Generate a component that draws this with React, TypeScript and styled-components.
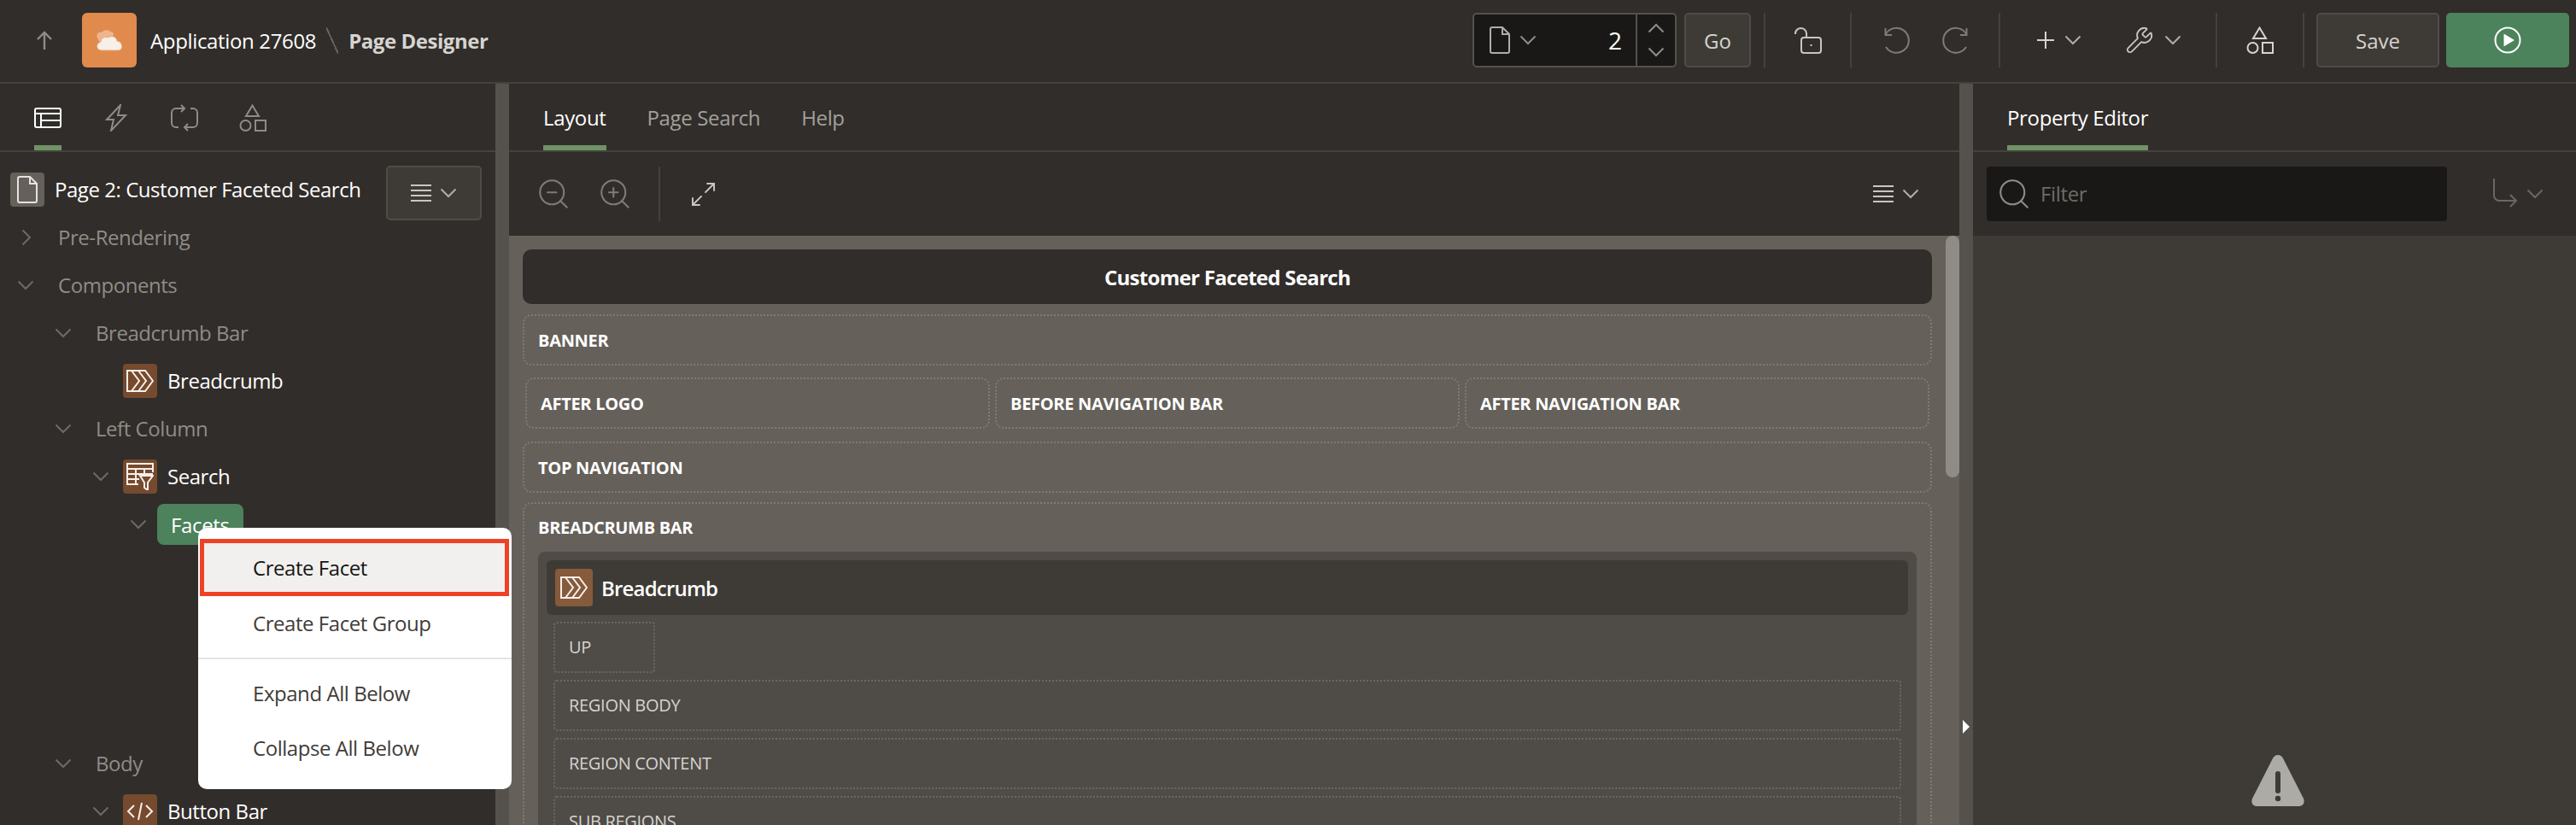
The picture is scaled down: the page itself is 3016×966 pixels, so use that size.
import React from "react";
import styled, { createGlobalStyle } from "styled-components";
import { Search, Wrench, ZoomIn, ZoomOut } from "lucide-react";

const FONT = `"Open Sans", "Liberation Sans", sans-serif`;

const GlobalStyle = createGlobalStyle`
  html, body {
    margin: 0;
    padding: 0;
    background: #312d2a;
    overflow: hidden;
  }
  * {
    box-sizing: border-box;
  }
`;

const Page = styled.div`
  position: relative;
  width: 3016px;
  height: 966px;
  overflow: hidden;
  background: #312d2a;
  font-family: ${FONT};
  color: #fff;
`;

const Header = styled.header`
  display: flex;
  align-items: center;
  height: 98px;
  padding: 0 8px 2px 0;
  border-bottom: 2px solid #45423e;
`;

const UpButton = styled.div`
  display: flex;
  justify-content: center;
  width: 96px;
  padding-left: 8px;
`;

const AppLogo = styled.div`
  display: flex;
  align-items: center;
  justify-content: center;
  width: 64px;
  height: 64px;
  margin-right: 16px;
  border-radius: 6px;
  background: #e08a4d;
`;

const AppName = styled.span`
  font-size: 24px;
  letter-spacing: -0.35px;
  color: #fff;
`;

const Slash = styled.span`
  width: 14px;
  height: 31px;
  margin: 0 12px;
  background: linear-gradient(
    to top right,
    transparent calc(50% - 1px),
    #65605a calc(50% - 1px),
    #65605a calc(50% + 1px),
    transparent calc(50% + 1px)
  );
`;

const PageName = styled.span`
  font-size: 24px;
  font-weight: 700;
  letter-spacing: -0.45px;
  color: #d6d4d0;
`;

const HeaderTools = styled.div`
  display: flex;
  align-items: center;
  height: 64px;
  margin-left: auto;
`;

const PageBox = styled.div`
  display: flex;
  align-items: stretch;
  width: 239px;
  height: 64px;
  border: 2px solid #55514c;
  border-radius: 5px;
  background: #191816;
`;

const PagePicker = styled.div`
  display: flex;
  align-items: center;
  gap: 11px;
  padding-left: 18px;
`;

const PageNumber = styled.div`
  flex: 1;
  align-self: center;
  padding-right: 16px;
  font-size: 28px;
  text-align: right;
  color: #fff;
`;

const Spinner = styled.div`
  display: flex;
  flex-direction: column;
  align-items: center;
  justify-content: center;
  gap: 16px;
  width: 46px;
  border-left: 2px solid #55514c;
`;

const GhostButton = styled.div<{ $width: number; $left?: number }>`
  display: flex;
  align-items: center;
  justify-content: center;
  width: ${({ $width }) => $width}px;
  height: 64px;
  margin-left: ${({ $left }) => $left ?? 0}px;
  border: 2px solid #4f4b47;
  border-radius: 5px;
  background: #3e3b36;
  font-size: 24px;
  color: #d6d4d0;
`;

const RunButton = styled.div`
  display: flex;
  align-items: center;
  justify-content: center;
  width: 144px;
  height: 64px;
  margin-left: 8px;
  border-radius: 5px;
  background: #4c825c;
`;

const ToolSep = styled.span<{ $left?: number }>`
  width: 2px;
  height: 64px;
  margin-left: ${({ $left }) => $left ?? 0}px;
  background: #45423e;
`;

const ToolCell = styled.div<{ $width: number }>`
  display: flex;
  align-items: center;
  justify-content: center;
  gap: 12px;
  width: ${({ $width }) => $width}px;
`;

const Workspace = styled.div`
  display: grid;
  grid-template-columns: 580px 16px 1698px 16px 706px;
  height: 868px;
`;

const Pane = styled.section`
  display: flex;
  flex-direction: column;
  min-width: 0;
  overflow: hidden;
`;

const Splitter = styled.div`
  position: relative;
  background: #55514c;
`;

const SplitterArrow = styled.span`
  position: absolute;
  left: 4px;
  top: 745px;
  width: 0;
  height: 0;
  border-top: 8px solid transparent;
  border-bottom: 8px solid transparent;
  border-left: 8px solid #fff;
`;

const TabBar = styled.div<{ $gap: number }>`
  display: flex;
  flex: none;
  gap: ${({ $gap }) => $gap}px;
  height: 80px;
  padding-left: 40px;
  border-bottom: 2px solid #45423e;
`;

const Tab = styled.div<{ $active?: boolean }>`
  display: flex;
  align-items: center;
  justify-content: center;
  height: 78px;
  padding-top: 7px;
  border-bottom: 6px solid ${({ $active }) => ($active ? "#6f9266" : "transparent")};
  font-size: 24px;
  letter-spacing: -0.35px;
  color: ${({ $active }) => ($active ? "#fff" : "#a3a09b")};
`;

const TitleRow = styled.div`
  display: flex;
  flex: none;
  height: 72px;
  padding: 24px 16px 0 12px;
`;

const TitleIcon = styled.div`
  display: flex;
  align-items: center;
  justify-content: center;
  width: 40px;
  height: 40px;
  border-radius: 4px;
  background: #65605a;
`;

const TitleText = styled.div`
  height: 40px;
  margin-left: 12px;
  font-size: 24px;
  line-height: 40px;
  letter-spacing: -0.45px;
  white-space: nowrap;
`;

const TreeMenuButton = styled.div`
  display: flex;
  align-items: center;
  justify-content: center;
  gap: 10px;
  width: 112px;
  height: 64px;
  margin: -8px 0 0 auto;
  border: 2px solid #4f4b47;
  border-radius: 5px;
  background: #3e3b36;
`;

const TreeRow = styled.div<{ $pad: number }>`
  display: flex;
  flex: none;
  align-items: center;
  height: 56px;
  padding-left: ${({ $pad }) => $pad}px;
`;

const TreeToggle = styled.span<{ $width: number }>`
  display: flex;
  flex: none;
  align-items: center;
  width: ${({ $width }) => $width}px;
`;

const TreeLabel = styled.span<{ $strong?: boolean }>`
  margin-top: -2px;
  font-size: 24px;
  letter-spacing: -0.45px;
  color: ${({ $strong }) => ($strong ? "#fff" : "#8f8c87")};
`;

const TreeBadge = styled.span<{ $size?: number }>`
  display: flex;
  flex: none;
  align-items: center;
  justify-content: center;
  width: ${({ $size }) => $size ?? 40}px;
  height: ${({ $size }) => $size ?? 40}px;
  margin-right: 12px;
  border-radius: 4px;
  background: #754a2e;
`;

const SelectedNode = styled.span`
  display: flex;
  align-items: center;
  width: 101px;
  height: 48px;
  padding-left: 16px;
  border-radius: 8px;
  background: #4c825c;
  font-size: 24px;
  letter-spacing: -0.35px;
  color: #fff;
`;

const TreeGap = styled.div`
  flex: none;
  height: 224px;
`;

const Toolbar = styled.div`
  display: flex;
  flex: none;
  align-items: center;
  height: 98px;
`;

const ToolIcon = styled.span<{ $left: number }>`
  display: flex;
  align-items: center;
  margin-left: ${({ $left }) => $left}px;
`;

const ToolbarSep = styled.span`
  width: 2px;
  height: 64px;
  margin-left: 30px;
  background: #45423e;
`;

const ToolbarEnd = styled.div<{ $right: number }>`
  display: flex;
  align-items: center;
  gap: 10px;
  margin: 0 ${({ $right }) => $right}px 0 auto;
`;

const FilterBox = styled.div`
  display: flex;
  align-items: center;
  width: 539px;
  height: 64px;
  margin-left: 16px;
  padding-left: 11px;
  border-radius: 4px;
  background: #191816;
`;

const FilterText = styled.span`
  margin: -2px 0 0 10px;
  font-size: 24px;
  letter-spacing: -0.35px;
  color: #6f6b66;
`;

const Canvas = styled.div`
  position: relative;
  flex: 1;
  padding: 16px 32px 0 16px;
  overflow: hidden;
  background: #65605a;
`;

const CanvasTitle = styled.div`
  display: flex;
  align-items: center;
  justify-content: center;
  height: 64px;
  margin-bottom: 12px;
  border-radius: 10px;
  background: #312d2a;
  font-size: 24px;
  font-weight: 700;
  letter-spacing: -0.7px;
`;

const Slot = styled.div<{ $after: number }>`
  height: 60px;
  margin-bottom: ${({ $after }) => $after}px;
  padding-left: 16px;
  border: 2px dotted #7f7b76;
  border-radius: 10px;
  font-size: 20px;
  font-weight: 700;
  line-height: 57px;
  letter-spacing: -0.3px;
  color: #fff;
`;

const SlotRow = styled.div`
  display: grid;
  grid-template-columns: repeat(3, 1fr);
  gap: 6px;
  margin: 0 3px 15px;
`;

const BreadcrumbSlot = styled.div`
  height: 500px;
  padding: 0 16px;
  border: 2px dotted #7f7b76;
  border-radius: 10px;
`;

const BreadcrumbLabel = styled.div`
  height: 56px;
  font-size: 20px;
  font-weight: 700;
  line-height: 56px;
  letter-spacing: -0.3px;
`;

const RegionBox = styled.div`
  display: flex;
  flex-direction: column;
  gap: 8px;
  height: 400px;
  padding: 10px 10px;
  border-radius: 8px 8px 0 0;
  background: #4f4b47;
`;

const RegionHead = styled.div`
  display: flex;
  align-items: center;
  flex: none;
  height: 64px;
  padding-left: 10px;
  border-radius: 6px;
  background: #3e3b36;
  font-size: 24px;
  font-weight: 600;
  letter-spacing: -0.8px;
`;

const RegionBadge = styled(TreeBadge)`
  width: 44px;
  height: 44px;
  margin-right: 10px;
  background: #855b3c;
`;

const InnerSlot = styled.div<{ $small?: boolean }>`
  flex: none;
  width: ${({ $small }) => ($small ? "119px" : "auto")};
  height: 60px;
  margin: 0 ${({ $small }) => ($small ? "0" : "8px")} 0 8px;
  padding-left: 16px;
  border: 2px dotted #6b6762;
  border-radius: 4px;
  font-size: 20px;
  line-height: 56px;
  letter-spacing: -0.3px;
  color: #d6d4d0;
`;

const ScrollThumb = styled.div`
  position: absolute;
  top: 0;
  right: 0;
  width: 16px;
  height: 283px;
  border-radius: 8px;
  background: #8f8b86;
`;

const PropertyBody = styled.div`
  display: flex;
  flex: 1;
  justify-content: center;
  padding: 608px 0 0 8px;
  background: #3e3b36;
`;

const ContextMenu = styled.div`
  position: absolute;
  left: 232px;
  top: 618px;
  width: 367px;
  height: 306px;
  padding: 13px 3px 0 2px;
  border-radius: 10px;
  background: #fff;
  color: #3f3c38;
`;

const MenuItem = styled.div<{ $focused?: boolean }>`
  display: flex;
  align-items: center;
  height: ${({ $focused }) => ($focused ? 67 : 64)}px;
  padding-left: ${({ $focused }) => ($focused ? 57 : 62)}px;
  padding-bottom: ${({ $focused }) => ($focused ? 0 : 2)}px;
  border: ${({ $focused }) => ($focused ? "5px solid #ee4126" : "none")};
  background: ${({ $focused }) => ($focused ? "#f1f0ee" : "transparent")};
  font-size: 24px;
  letter-spacing: -0.45px;
  color: ${({ $focused }) => ($focused ? "#161513" : "#3f3c38")};
`;

const MenuDivider = styled.div`
  height: 2px;
  margin: 8px -3px 8px -2px;
  background: #e4e3e1;
`;

const Line = styled.svg<{ $color?: string; $weight?: number; $flip?: boolean }>`
  display: block;
  flex: none;
  fill: none;
  stroke: ${({ $color }) => $color ?? "#c9c6c2"};
  stroke-width: ${({ $weight }) => $weight ?? 2};
  transform: ${({ $flip }) => ($flip ? "scaleX(-1)" : "none")};
`;

type IconProps = { color?: string };

const ChevronDown = ({ color = "#b0ada9" }: IconProps) => (
  <Line width="20" height="12" viewBox="0 0 20 12" $color={color}>
    <path d="M1.5 1.5 10 10l8.5-8.5" />
  </Line>
);

const ChevronUp = ({ color = "#8f8c87" }: IconProps) => (
  <Line width="20" height="12" viewBox="0 0 20 12" $color={color}>
    <path d="M1.5 10.5 10 2l8.5 8.5" />
  </Line>
);

const ChevronRight = ({ color = "#6e6a65" }: IconProps) => (
  <Line width="12" height="20" viewBox="0 0 12 20" $color={color}>
    <path d="M1.5 1.5 10 10l-8.5 8.5" />
  </Line>
);

const DocIcon = ({ color = "#b0ada9" }: IconProps) => (
  <Line width="24" height="32" viewBox="0 0 24 32" $color={color}>
    <path d="M1 3a2 2 0 0 1 2-2h12l8 8v20a2 2 0 0 1-2 2H3a2 2 0 0 1-2-2z" />
    <path d="M15 1v8h8" />
  </Line>
);

const MenuLines = () => (
  <Line width="24" height="20" viewBox="0 0 24 20" $color="#c9c6c2">
    <path d="M0 1h24M0 7h24M0 13h24M0 19h24" />
  </Line>
);

const ShapesIcon = ({ color = "#d6d4d0" }: IconProps) => (
  <Line width="32" height="32" viewBox="0 0 32 32" $color={color}>
    <path d="M15.5 1.5 23 14H8z" />
    <circle cx="7.5" cy="25" r="6" />
    <rect x="19" y="19" width="12" height="12" />
  </Line>
);

const UndoIcon = ({ flip }: { flip?: boolean }) => (
  <Line width="32" height="32" viewBox="0 0 32 32" $color="#7f7b76" $flip={flip}>
    <path d="M3.5 9.5A14.5 14.5 0 1 1 4 24" />
    <path d="M3.5 2v8H11" />
  </Line>
);

const LockIcon = () => (
  <Line width="32" height="32" viewBox="0 0 32 32" $color="#c9c6c2">
    <path d="M1 9A6.5 6.5 0 0 1 14 8v5" />
    <rect x="8" y="13" width="23" height="18" rx="3" />
    <path d="M19.5 21v2" />
  </Line>
);

const PlusIcon = () => (
  <Line width="20" height="20" viewBox="0 0 20 20" $color="#d6d4d0">
    <path d="M10 0v20M0 10h20" />
  </Line>
);

const PlayIcon = () => (
  <svg width="32" height="32" viewBox="0 0 32 32">
    <circle cx="16" cy="16" r="14.5" fill="none" stroke="#fff" strokeWidth="2" />
    <path d="M11.5 8.5 24 16l-12.5 7.5z" fill="#fff" />
  </svg>
);

const CloudIcon = () => (
  <svg width="32" height="28" viewBox="0 0 32 28">
    <path d="M2 11C0 7 4 4 7 5c2-3 7-4 10-1 3 0 4 2 4 4L6 18c-2-2-3-5-4-7z" fill="#efb68e" />
    <path
      d="M7 26c-7 0-7-9-1-10 0-5 6-7 9-5 3-3 10-1 10 4 7 1 8 11 1 11z"
      fill="#f8efe9"
      stroke="#e9a577"
      strokeWidth="1"
    />
  </svg>
);

const LayoutIcon = () => (
  <Line width="32" height="24" viewBox="0 0 32 24" $color="#fff">
    <rect x="1" y="1" width="30" height="22" rx="2" />
    <path d="M1 7h30M8 7v16M8 15h23" />
  </Line>
);

const BoltIcon = () => (
  <Line width="32" height="32" viewBox="0 0 32 32" $color="#8f8c87">
    <path d="M21 1 5 18h8l-3 13 17-18h-9z" />
  </Line>
);

const LoopIcon = () => (
  <Line width="32" height="32" viewBox="0 0 32 32" $color="#8f8c87">
    <path d="M16 5H6a5 5 0 0 0-5 5v12a5 5 0 0 0 5 5h3" />
    <path d="M12 1l4 4-4 4" />
    <path d="M16 27h10a5 5 0 0 0 5-5V10a5 5 0 0 0-5-5h-3" />
    <path d="M20 23l-4 4 4 4" />
  </Line>
);

const CrumbIcon = ({ size = 32 }: { size?: number }) => (
  <Line width={size} height={(size * 26) / 32} viewBox="0 0 32 26" $color="#f8efe9">
    <path d="M1 1h21l9 12-9 12H1z" />
    <path d="M6 1l9 12-9 12M14 1l9 12-9 12" />
  </Line>
);

const SearchRegionIcon = () => (
  <Line width="32" height="32" viewBox="0 0 32 32" $color="#f8efe9">
    <path d="M14 25H1V1h30v10" />
    <path d="M1 7h30M1 13h30M1 19h14M11 7v18M21 7v6" />
    <path d="M16 15h15l-6 8v9l-4-3v-6z" />
  </Line>
);

const CodeIcon = () => (
  <Line width="32" height="24" viewBox="0 0 32 24" $color="#f8efe9">
    <path d="M9 5 2 12l7 7M14 22l4-20M23 5l7 7-7 7" />
  </Line>
);

const BranchIcon = () => (
  <Line width="30" height="36" viewBox="0 0 30 36" $color="#6b6762">
    <path d="M2 0v20a6 6 0 0 0 6 6h20" />
    <path d="M21 19l7 7-7 7" />
  </Line>
);

const WarningIcon = () => (
  <svg width="64" height="60" viewBox="0 0 64 60">
    <path
      d="M32 0c3 0 5 2 6 4l24 47c2 5-1 9-5 9H7c-4 0-7-4-5-9L26 4c1-2 3-4 6-4z"
      fill="#acaba6"
    />
    <rect x="29" y="19" width="6" height="26" rx="3" fill="#3e3b36" />
    <circle cx="32" cy="51" r="3.2" fill="#3e3b36" />
  </svg>
);

const App: React.FC = () => {
  return (
    <Page>
      <GlobalStyle />
      <Header>
        <UpButton>
          <Line width="18" height="22" viewBox="0 0 18 22" $color="#8f8c87" $weight={2.4}>
            <path d="M9 22V2M1 10l8-8 8 8" />
          </Line>
        </UpButton>
        <AppLogo>
          <CloudIcon />
        </AppLogo>
        <AppName>Application 27608</AppName>
        <Slash />
        <PageName>Page Designer</PageName>
        <HeaderTools>
          <PageBox>
            <PagePicker>
              <DocIcon />
              <ChevronDown color="#8f8c87" />
            </PagePicker>
            <PageNumber>2</PageNumber>
            <Spinner>
              <ChevronUp />
              <ChevronDown color="#8f8c87" />
            </Spinner>
          </PageBox>
          <GhostButton $width={78} $left={9}>
            Go
          </GhostButton>
          <ToolSep $left={15} />
          <ToolCell $width={99}>
            <LockIcon />
          </ToolCell>
          <ToolSep />
          <ToolCell $width={17} />
          <ToolCell $width={70}>
            <UndoIcon />
          </ToolCell>
          <ToolCell $width={70}>
            <UndoIcon flip />
          </ToolCell>
          <ToolCell $width={15} />
          <ToolSep />
          <ToolCell $width={14} />
          <ToolCell $width={110}>
            <PlusIcon />
            <ChevronDown />
          </ToolCell>
          <ToolCell $width={110}>
            <Wrench size={34} strokeWidth={1.3} color="#c9c6c2" />
            <ChevronDown />
          </ToolCell>
          <ToolCell $width={18} />
          <ToolSep />
          <ToolCell $width={100}>
            <ShapesIcon />
          </ToolCell>
          <ToolSep />
          <GhostButton $width={144} $left={14}>
            Save
          </GhostButton>
          <RunButton>
            <PlayIcon />
          </RunButton>
        </HeaderTools>
      </Header>

      <Workspace>
        <Pane>
          <TabBar $gap={48}>
            <Tab $active>
              <LayoutIcon />
            </Tab>
            <Tab>
              <BoltIcon />
            </Tab>
            <Tab>
              <LoopIcon />
            </Tab>
            <Tab>
              <ShapesIcon color="#8f8c87" />
            </Tab>
          </TabBar>
          <TitleRow>
            <TitleIcon>
              <DocIcon color="#e4e2df" />
            </TitleIcon>
            <TitleText>Page 2: Customer Faceted Search</TitleText>
            <TreeMenuButton>
              <MenuLines />
              <ChevronDown />
            </TreeMenuButton>
          </TitleRow>
          <TreeRow $pad={25}>
            <TreeToggle $width={43}>
              <ChevronRight />
            </TreeToggle>
            <TreeLabel>Pre-Rendering</TreeLabel>
          </TreeRow>
          <TreeRow $pad={20}>
            <TreeToggle $width={48}>
              <ChevronDown color="#6e6a65" />
            </TreeToggle>
            <TreeLabel>Components</TreeLabel>
          </TreeRow>
          <TreeRow $pad={64}>
            <TreeToggle $width={48}>
              <ChevronDown color="#6e6a65" />
            </TreeToggle>
            <TreeLabel>Breadcrumb Bar</TreeLabel>
          </TreeRow>
          <TreeRow $pad={144}>
            <TreeBadge>
              <CrumbIcon />
            </TreeBadge>
            <TreeLabel $strong>Breadcrumb</TreeLabel>
          </TreeRow>
          <TreeRow $pad={64}>
            <TreeToggle $width={48}>
              <ChevronDown color="#6e6a65" />
            </TreeToggle>
            <TreeLabel>Left Column</TreeLabel>
          </TreeRow>
          <TreeRow $pad={108}>
            <TreeToggle $width={36}>
              <ChevronDown color="#6e6a65" />
            </TreeToggle>
            <TreeBadge>
              <SearchRegionIcon />
            </TreeBadge>
            <TreeLabel $strong>Search</TreeLabel>
          </TreeRow>
          <TreeRow $pad={152}>
            <TreeToggle $width={32}>
              <ChevronDown color="#6e6a65" />
            </TreeToggle>
            <SelectedNode>Facets</SelectedNode>
          </TreeRow>
          <TreeGap />
          <TreeRow $pad={64}>
            <TreeToggle $width={48}>
              <ChevronDown color="#6e6a65" />
            </TreeToggle>
            <TreeLabel>Body</TreeLabel>
          </TreeRow>
          <TreeRow $pad={108}>
            <TreeToggle $width={36}>
              <ChevronDown color="#6e6a65" />
            </TreeToggle>
            <TreeBadge>
              <CodeIcon />
            </TreeBadge>
            <TreeLabel $strong>Button Bar</TreeLabel>
          </TreeRow>
        </Pane>

        <Splitter />

        <Pane>
          <TabBar $gap={48}>
            <Tab $active>Layout</Tab>
            <Tab>Page Search</Tab>
            <Tab>Help</Tab>
          </TabBar>
          <Toolbar>
            <ToolIcon $left={31}>
              <ZoomOut size={42} strokeWidth={1.2} color="#7f7b76" />
            </ToolIcon>
            <ToolIcon $left={30}>
              <ZoomIn size={42} strokeWidth={1.2} color="#7f7b76" />
            </ToolIcon>
            <ToolbarSep />
            <ToolIcon $left={37}>
              <Line width="27" height="27" viewBox="0 0 28 28" $color="#c9c6c2">
                <path d="M27 1 16 12M18 1h9v9M1 27l11-11M1 18v9h9" />
              </Line>
            </ToolIcon>
            <ToolbarEnd $right={47}>
              <MenuLines />
              <ChevronDown />
            </ToolbarEnd>
          </Toolbar>
          <Canvas>
            <ScrollThumb />
            <CanvasTitle>Customer Faceted Search</CanvasTitle>
            <Slot $after={14}>BANNER</Slot>
            <SlotRow>
              <Slot $after={0}>AFTER LOGO</Slot>
              <Slot $after={0}>BEFORE NAVIGATION BAR</Slot>
              <Slot $after={0}>AFTER NAVIGATION BAR</Slot>
            </SlotRow>
            <Slot $after={11}>TOP NAVIGATION</Slot>
            <BreadcrumbSlot>
              <BreadcrumbLabel>BREADCRUMB BAR</BreadcrumbLabel>
              <RegionBox>
                <RegionHead>
                  <RegionBadge>
                    <CrumbIcon size={32} />
                  </RegionBadge>
                  Breadcrumb
                </RegionHead>
                <InnerSlot $small>UP</InnerSlot>
                <InnerSlot>REGION BODY</InnerSlot>
                <InnerSlot>REGION CONTENT</InnerSlot>
                <InnerSlot>SUB REGIONS</InnerSlot>
              </RegionBox>
            </BreadcrumbSlot>
          </Canvas>
        </Pane>

        <Splitter>
          <SplitterArrow />
        </Splitter>

        <Pane>
          <TabBar $gap={48}>
            <Tab $active>Property Editor</Tab>
          </TabBar>
          <Toolbar>
            <FilterBox>
              <Search size={42} strokeWidth={1.2} color="#8f8c87" />
              <FilterText>Filter</FilterText>
            </FilterBox>
            <ToolbarEnd $right={38}>
              <BranchIcon />
              <ChevronDown color="#6b6762" />
            </ToolbarEnd>
          </Toolbar>
          <PropertyBody>
            <WarningIcon />
          </PropertyBody>
        </Pane>
      </Workspace>

      <ContextMenu>
        <MenuItem $focused>Create Facet</MenuItem>
        <MenuItem>Create Facet Group</MenuItem>
        <MenuDivider />
        <MenuItem>Expand All Below</MenuItem>
        <MenuItem>Collapse All Below</MenuItem>
      </ContextMenu>
    </Page>
  );
};

export default App;
